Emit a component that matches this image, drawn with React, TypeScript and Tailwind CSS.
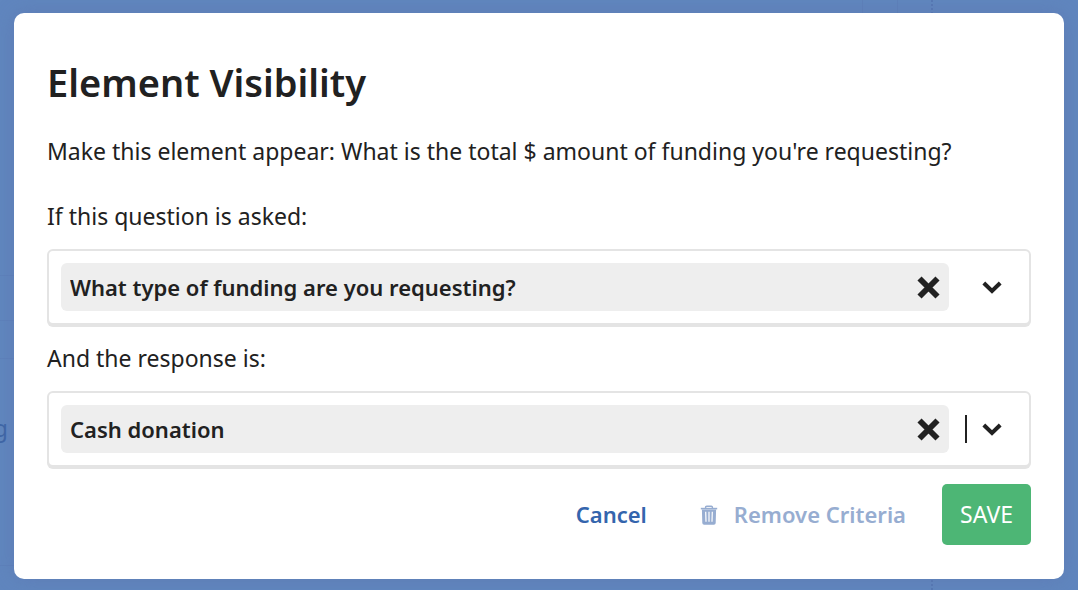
import { useState } from 'react';

const questions = ['What type of funding are you requesting?', "What is your organization's name?"];
const responses = ['Cash donation', 'In-kind donation', 'Sponsorship'];

export default function App() {
  const [question, setQuestion] = useState(questions[0]);
  const [response, setResponse] = useState(responses[0]);

  return (
    <div className="relative flex min-h-screen flex-col overflow-hidden bg-[#6086be] px-3.5 pt-[13px] pb-[11px] font-['Noto_Sans','Open_Sans',sans-serif] text-[23px] text-[#212121]">
      <PageBehind />
      <div
        role="dialog"
        aria-labelledby="dialog-title"
        className="relative rounded-[10px] bg-white px-[33px] pt-[34px] pb-[34px] shadow-[0_0_20px_rgba(90,110,170,0.45)]"
      >
        <h1 id="dialog-title" className="text-[38px] leading-[70px] font-semibold">
          Element Visibility
        </h1>
        <p className="mt-[18px] leading-8">
          Make this element appear: What is the total $ amount of funding you're requesting?
        </p>
        <div className="mt-[33px]">
          <CriteriaSelect
            id="question"
            label="If this question is asked:"
            value={question}
            options={questions}
            onChange={setQuestion}
          />
        </div>
        <div className="mt-[17px]">
          <CriteriaSelect
            id="response"
            label="And the response is:"
            value={response}
            options={responses}
            onChange={setResponse}
            active
          />
        </div>
        <div className="mt-[17px] flex flex-wrap items-center justify-end">
          <button type="button" className="text-[22px] font-semibold text-[#3465ad]">
            Cancel
          </button>
          <button type="button" className="ml-[53px] flex items-center gap-4 text-[22px] font-semibold text-[#97add1]">
            <TrashIcon />
            Remove Criteria
          </button>
          <button type="button" className="ml-9 rounded-[5px] bg-[#4db675] px-[18px] py-[14px] leading-[33px] text-white">
            SAVE
          </button>
        </div>
      </div>
    </div>
  );
}

type CriteriaSelectProps = {
  id: string;
  label: string;
  value: string;
  options: string[];
  onChange: (value: string) => void;
  active?: boolean;
};

function CriteriaSelect({ id, label, value, options, onChange, active = false }: CriteriaSelectProps) {
  return (
    <>
      <label htmlFor={id} className="block leading-8">
        {label}
      </label>
      <div className="mt-[17px] flex items-center rounded-md border-2 border-[#e4e4e4] bg-white py-3 pr-[27px] pl-3 shadow-[0_2px_0_#e4e4e4]">
        <div className="flex min-w-0 flex-1 items-center rounded-md bg-[#eeeeee] pr-[9px] pl-[9px]">
          <select
            id={id}
            value={value}
            onChange={(event) => onChange(event.target.value)}
            className="h-12 min-w-0 flex-1 appearance-none bg-transparent text-[22px] font-semibold outline-none"
          >
            <option value="" />
            {options.map((option) => (
              <option key={option} value={option}>
                {option}
              </option>
            ))}
          </select>
          <button type="button" aria-label={`Clear ${id}`} onClick={() => onChange('')}>
            <CrossIcon />
          </button>
        </div>
        <span className={`ml-4 h-7 w-0.5 ${active ? 'bg-[#212121]' : 'bg-transparent'}`} />
        <ChevronIcon />
      </div>
    </>
  );
}

function CrossIcon() {
  return (
    <svg width="23" height="23" viewBox="0 0 23 23" fill="none" stroke="#212121" strokeWidth="5.8" className="block">
      <path d="M2.5 2.5l18 18M20.5 2.5l-18 18" />
    </svg>
  );
}

function ChevronIcon() {
  return (
    <svg width="20" height="14" viewBox="0 0 20 14" fill="none" stroke="#212121" strokeWidth="4" className="ml-[15px] block">
      <path d="M1.8 3l8.2 8 8.2-8" strokeLinejoin="miter" />
    </svg>
  );
}

function TrashIcon() {
  return (
    <svg width="18" height="20" viewBox="0 0 18 20" fill="none" className="block">
      <path d="M5.6 3V2.3Q5.6 1.2 6.7 1.2h4.6q1.1 0 1.1 1.1V3" stroke="#97add1" strokeWidth="1.4" />
      <path d="M.8 2.8h16.4v1.6H.8z" fill="#97add1" />
      <path
        fillRule="evenodd"
        d="M1.9 4.4h14.2L15.7 18q-.1 1.7-1.8 1.7H4.1q-1.7 0-1.8-1.7zM5.1 6.8l.3 10h1.2L6.3 6.8zm3.3 0v10h1.2v-10zm3.3 0l-.3 10h1.2l.3-10z"
        fill="#97add1"
      />
    </svg>
  );
}

// Dimmed remains of the form page that show around the dialog.
function PageBehind() {
  return (
    <div aria-hidden="true" className="pointer-events-none absolute inset-0">
      <span className="absolute top-[412px] right-full -mr-2 leading-8 text-[#3e65a5]">g</span>
      <span className="absolute top-0 left-[862px] h-4 w-px bg-[#5d80b9]" />
      <span className="absolute top-0 left-[897px] h-4 w-px bg-[#5d80b9]" />
      <span className="absolute inset-y-0 left-[931px] border-l-2 border-dotted border-[#5678b3]" />
      <span className="absolute top-[275px] left-0 h-px w-4 bg-[#5d81ba]" />
      <span className="absolute top-[320px] left-0 h-px w-4 bg-[#5d81ba]" />
      <span className="absolute top-[358px] left-0 h-px w-4 bg-[#5d81ba]" />
      <span className="absolute top-[565px] left-0 h-px w-4 bg-[#5d81ba]" />
    </div>
  );
}
